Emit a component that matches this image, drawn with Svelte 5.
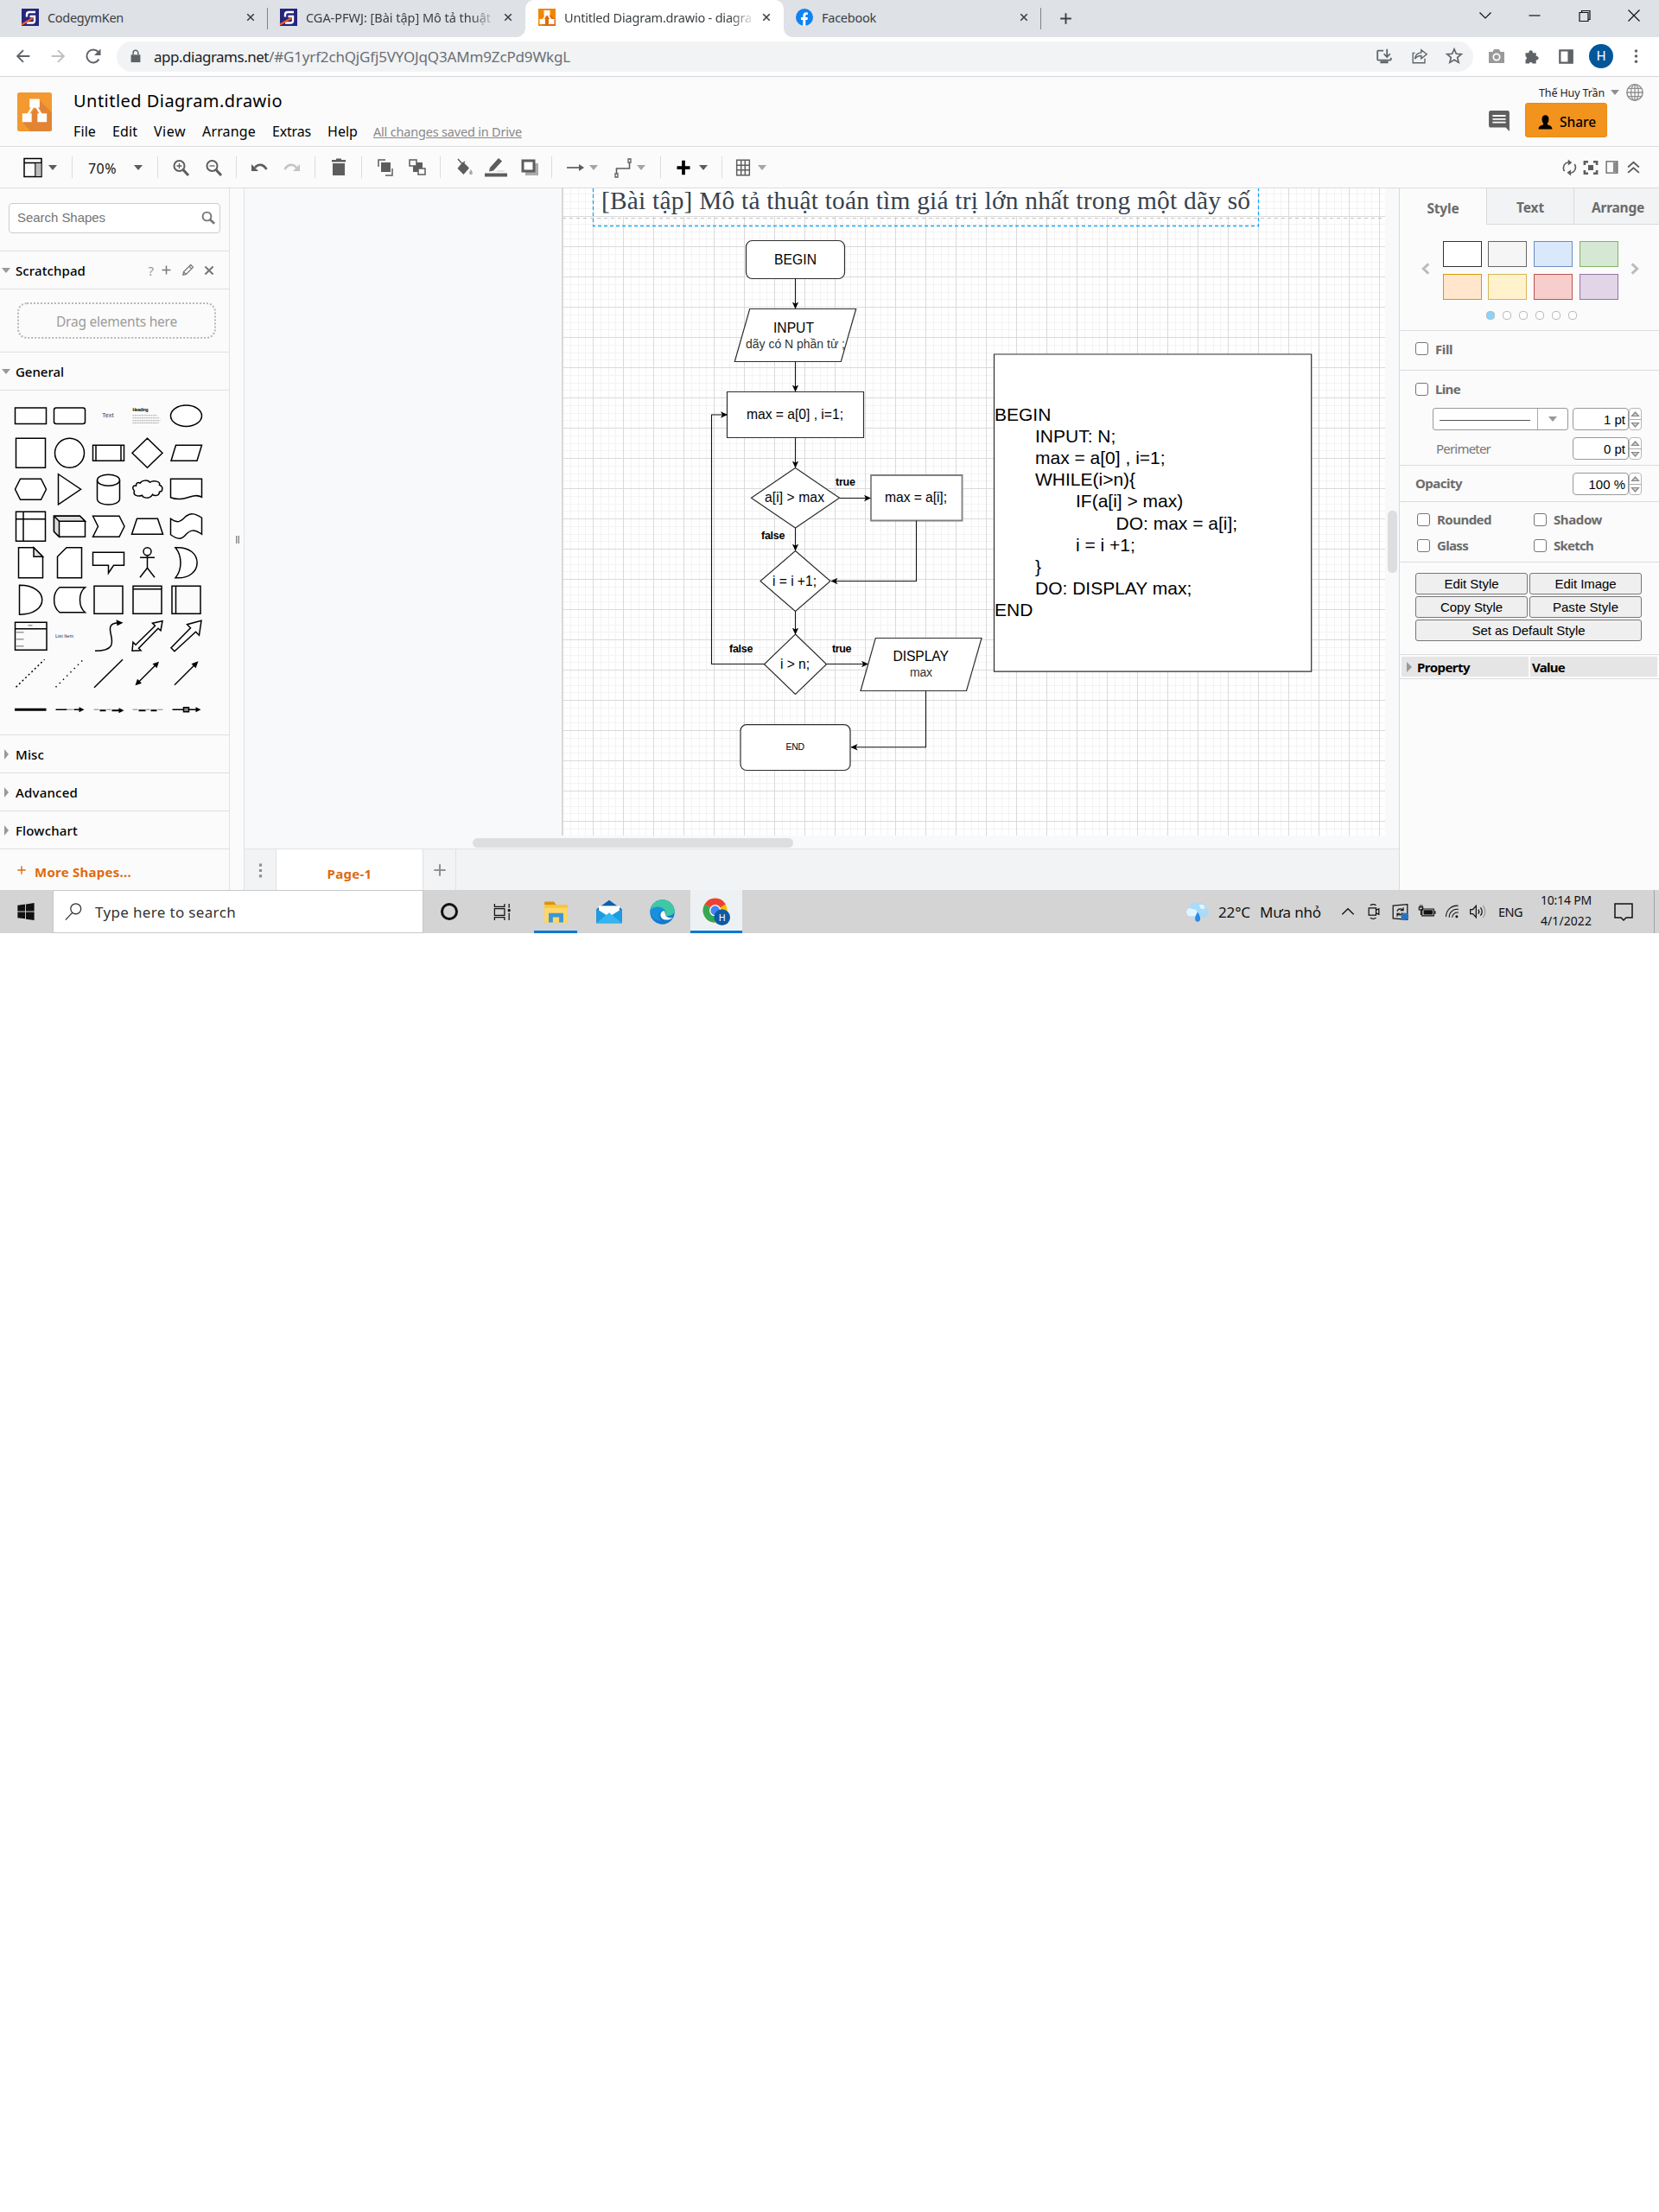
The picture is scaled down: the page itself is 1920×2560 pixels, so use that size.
<script>
  // Adjusts tracking so that a label occupies the given width in pixels.
  function fit(node, width) {
    const natural = node.getBoundingClientRect().width;
    node.style.letterSpacing = (width - natural) / node.textContent.length + 'px';
  }

  const logo = '<path d="M12 5v5M11 9 6 17M13 9l5 8" stroke="#fff" stroke-width="1.6" fill="none"/><path d="M8.5 4h7v6h-7zM3.500 14h6.500v6h-6.500zM14 14h6.500v6h-6.500z" fill="#fff"/>';

  const icons = {
    close: '<path d="M7 7l10 10M17 7 7 17" stroke-width="2.2"/>',
    plus: '<path d="M12 4v16M4 12h16" stroke-width="2.4"/>',
    chevDown: '<path d="M5.500 8.500l6.500 6.500 6.500-6.500" stroke-width="1.200"/>',
    minimize: '<path d="M5.500 12h13" stroke-width="1.200"/>',
    restore: '<path d="M6 8.500h10v10H6zM8.500 8.500V6.500h9.500v10h-2" stroke-width="1.200"/>',
    winClose: '<path d="M5.500 5.500l13 13M18.500 5.500l-13 13" stroke-width="1.200"/>',
    back: '<path d="M20 12H5M12 4.500 4.500 12l7.500 7.500" stroke-width="2"/>',
    forward: '<path d="M4 12h15M12 4.500l7.500 7.500-7.500 7.500" stroke-width="2"/>',
    reload: '<path d="M18.500 15.500A7.500 7.500 0 1 1 17.600 7" stroke-width="2"/><path d="M20.500 3.500v7.500H13z" fill="currentColor" stroke="none"/>',
    lock: '<path d="M5.500 10h13v10.500h-13z" fill="currentColor" stroke="none"/><path d="M8.500 10V7.500a3.500 3.500 0 0 1 7 0V10" stroke-width="1.800"/>',
    install: '<path d="M11 5H4.500a1 1 0 0 0-1 1v10a1 1 0 0 0 1 1h15a1 1 0 0 0 1-1v-2M15.500 3v9M11.500 9l4 4 4-4" stroke-width="1.900"/><path d="M7 18h10v3H7z" fill="currentColor" stroke="none"/>',
    share: '<path d="M6 8H3.500v12.500h15V15M14 4l7 5.500-7 5.500v-3.500c-4 0-6 1-8 4 .5-5 3-7.500 8-8z" stroke-width="1.500"/>',
    star: '<path d="M12 3l2.600 6 6.400.5-5 4.200 1.600 6.300L12 16.600 6.400 20 8 13.700 3 9.500 9.400 9z" stroke-width="1.800"/>',
    camera: '<path d="M3 7h4.500L9 4h6l1.500 3H21v13H3z" fill="currentColor" stroke="none"/><circle cx="12" cy="13" r="4.500" fill="#fff" stroke="none"/><circle cx="12" cy="13" r="2.800" fill="currentColor" stroke="none"/>',
    puzzle: '<path d="M4 7h4.500a2.600 2.600 0 1 1 5 0H18v4.500a2.600 2.600 0 1 1 0 5V21h-4.800a2.300 2.300 0 0 0-4.400 0H4v-4.800a2.300 2.300 0 0 0 0-4.400z" fill="currentColor" stroke="none"/>',
    sidePanel: '<path d="M4.500 4.500h15v15h-15z" stroke-width="2.400"/><path d="M14 4h6v16h-6z" fill="currentColor" stroke="none"/>',
    dots: '<path d="M10 2h4v4h-4zM10 10h4v4h-4zM10 18h4v4h-4z" fill="currentColor" stroke="none"/>',
    menuDots: '<circle cx="12" cy="4.500" r="2" fill="currentColor"  stroke="none"/><circle cx="12" cy="11.500" r="2" fill="currentColor" stroke="none"/><circle cx="12" cy="18.500" r="2" fill="currentColor" stroke="none"/>',
    globe: '<circle cx="12" cy="12" r="10" stroke-width="1.600"/><ellipse cx="12" cy="12" rx="4.800" ry="10" stroke-width="1.400"/><path d="M12 2v20M2 12h20M3.500 7h17M3.500 17h17" stroke-width="1.400"/>',
    comment: '<path d="M3 1h18a2 2 0 0 1 2 2v20l-4-4H3a2 2 0 0 1-2-2V3a2 2 0 0 1 2-2z" fill="currentColor" stroke="none"/><path d="M5 6.500h14M5 10h14M5 13.500h14" stroke="#fbfbfb" stroke-width="1.700"/>',
    person: '<path d="M2 22c0-4 3-5 7-6.500V14C7.500 12 7 9.500 7 7c0-3.500 2-5.500 5-5.500S17 3.500 17 7c0 2.500-.5 5-2 7v1.500c4 1.500 7 2.500 7 6.500z" fill="currentColor" stroke="none"/>',
    layout: '<path d="M2 1.500h20v21H2zM2 6.500h20M15 6.500v16" stroke-width="1.500"/><path d="M15.500 7h6v15h-6z" fill="#bbb" stroke="none"/>',
    zoomIn: '<circle cx="10.500" cy="10" r="6" stroke-width="2"/><path d="M15 14.500l6 6.500" stroke-width="3"/><path d="M10.500 7v6M7.500 10h6" stroke-width="1.300"/>',
    zoomOut: '<circle cx="10.500" cy="10" r="6" stroke-width="2"/><path d="M15 14.500l6 6.500" stroke-width="3"/><path d="M7.500 10h6" stroke-width="1.300"/>',
    undo: '<path d="M7 12c4-5 10-4 13.500 2" stroke-width="2.600"/><path d="M3 8v8h8z" fill="currentColor" stroke="none"/>',
    redo: '<path d="M17 12c-4-5-10-4-13.500 2" stroke-width="2.600"/><path d="M21 8v8h-8z" fill="currentColor" stroke="none"/>',
    trash: '<path d="M4 3h5V1.500h6V3h5v2.500H4zM5 7h14v14H5z" fill="currentColor" stroke="none"/>',
    front: '<path d="M7 6h11v11H7z" fill="currentColor" stroke="none"/><path d="M4 11V3h8M20 13v8h-8" stroke-width="1.500"/>',
    toBack: '<path d="M7 6h11v11H7z" fill="currentColor" stroke="none"/><path d="M3 3h8v7H3zM13 13h8v7h-8z" fill="#fbfbfb" stroke-width="1.500"/>',
    fill: '<path d="M4.500 13 11 5.500l7 7-6.500 7.500z" fill="currentColor" stroke="none"/><path d="M5 2l7 8M6 12l7-7" stroke-width="1.500"/><path d="M20 14c3 4 2 6 0 6s-3-2 0-6z" fill="#aaa" stroke="none"/>',
    pencil: '<path d="M5 12 15 1l4 3.500-10 11-5 1z" fill="currentColor" stroke="none"/><path d="M13 16h9" stroke="#ccc"/><path d="M-1 20.500h26" stroke-width="4"/>',
    shadow: '<path d="M7 7h15v14H7z" fill="#aaa" stroke="none"/><path d="M4 4h13v12H4z" fill="#fff" stroke-width="3"/>',
    arrow: '<path d="M2 12h19" stroke-width="1.700"/><path d="M16 8l6 4-6 4z" fill="currentColor" stroke="none"/>',
    connector: '<path d="M4.500 20v-7h15V4" stroke-width="1.600"/><path d="M3 19h3v4H3zM18 2h3v4h-3z" fill="#fff" stroke-width="1.300"/>',
    bigPlus: '<path d="M12 2v20M3 12h18" stroke-width="4.500"/>',
    table: '<path d="M4 2.500h16v19H4zM9.500 2v20M14.500 2v20M4 9h16M4 15h16" stroke-width="1.600"/>',
    refresh: '<path d="M5.500 17a8 8 0 0 1 6-12.500M19.500 7a8 8 0 0 1-6 12.500" stroke-width="1.900"/><path d="M10.500.5l5.500 4.500-5.500 4zM14.500 23.500l-5.500-4.500 5.500-4z" fill="currentColor" stroke="none"/>',
    fitPage: '<path d="M2.500 8V3H8M16 3h5.500v5M21.500 16v5H16M8 21H2.500v-5" stroke-width="3.400"/><path d="M8 8h8v8H8z" fill="currentColor" stroke="none"/>',
    formatPanel: '<path d="M3 2.500h18v19H3z" stroke-width="1.800"/><path d="M14 4h6v16h-6z" fill="currentColor" opacity=".7" stroke="none"/>',
    collapse: '<path d="M3 12l9-8 9 8M3 21l9-8 9 8" stroke-width="2.600"/>',
    search: '<circle cx="10" cy="10" r="6.500" stroke-width="2.600"/><path d="M15 15l6.500 6" stroke-width="3.600"/>',
    edit: '<path d="M4 20l1-5L16.500 3.500l4 4L9 19zM14 6l4 4M5 15l4 4" stroke-width="1.800"/>',
    prev: '<path d="M17 3.500 8 12l9 8.500" stroke-width="4.500"/>',
    next: '<path d="M7 3.500 16 12l-9 8.500" stroke-width="4.500"/>',
    windows: '<path d="M1.500 4 11 2.800v8.700H1.500zM12 2.600 22.500 1v10.500H12zM1.500 12.500H11V21l-9.500-1.200zM12 12.500h10.500V23L12 21.500z" fill="currentColor" stroke="none"/>',
    find: '<circle cx="15" cy="8.500" r="6.500" stroke-width="1.400"/><path d="M10.500 13.500 2 22.500" stroke-width="1.400"/>',
    ring: '<circle cx="12" cy="12" r="8.500" stroke-width="3"/>',
    taskView: '<path d="M2.500 2v3.500h12V2M2.500 22v-3.500h12V22M2.500 8h12v8h-12zM20 2v5M20 13v9" stroke-width="1.300"/><path d="M18.500 8.500h3v3h-3z" fill="currentColor" stroke="none"/>',
    explorer: '<path d="M1 3h8l2 2h12v17H1z" fill="#f9c440" stroke="none"/><path d="M1 2h9l2 3H1z" fill="#d9940a" stroke="none"/><path d="M1 8h22v14H1z" fill="#ffd766" stroke="none"/><path d="M5 13h14v9h-4v-5H9v5H5z" fill="#3a96dd" stroke="none"/>',
    mail: '<path d="M1 10 12 2l11 8v12H1z" fill="#0f5fae" stroke="none"/><path d="M3 7h18v8H3z" fill="#fff" stroke="none"/><path d="M1 9.500l11 7 11-7V22H1z" fill="#1b9de2" stroke="none"/><path d="M1 22l11-9 11 9z" fill="#35b5f1" stroke="none"/>',
    edge: '<circle cx="12" cy="12" r="11" fill="#1479cc" stroke="none"/><path d="M1.500 10C3 3 8 1 12 1c7 0 11 5 11 9.500 0 3-2.500 5-6 5-2 0-3-.7-2.500-2 2-4-5-8-13-3.500z" fill="#3fc8a4" stroke="none"/><path d="M1.500 10c5-4.500 12-2.500 12.500 1.500-5-1-7 4-3 8.500-7 0-10-5-9.500-10z" fill="#1990dc" stroke="none"/><path d="M14 11c-5 0-5 8 2 8 2 0 4-.8 5.500-2-2 1-7-.5-7-3.500z" fill="#fff" stroke="none"/>',
    chrome: '<circle cx="11" cy="11" r="10.500" fill="#fbbc05" stroke="none"/><path d="M1.900 5.700A10.500 10.500 0 0 1 20.100 5.700L11 11z" fill="#ea4335" stroke="none"/><path d="M1.900 5.700A10.500 10.500 0 0 0 11 21.500L11 11z" fill="#34a853" stroke="none"/><circle cx="11" cy="11" r="5" fill="#fff" stroke="none"/><circle cx="11" cy="11" r="4" fill="#4285f4" stroke="none"/><circle cx="17" cy="17" r="7" fill="#0d5aa7" stroke="none"/>',
    cloud: '<path d="M5 17a5 5 0 0 1-1-9.500C5 3 9 1 12.500 3 17 1 21 4 21 8c4 1 4 8-1 9z" fill="#a9dbfa" stroke="none"/><path d="M1 12c0-4 4-5 6-3 3-1 6 2 5 6-4 2-11 3-11-3zM14 5c3-2 6 0 6 3-2 2-5 1-6-3z" fill="#e2f5ff" stroke="none"/><path d="M12.500 12c4 6 3 10 0 10s-4-4 0-10z" fill="#2c8be8" stroke="none"/>',
    chevUp: '<path d="M4 16l8-8 8 8" stroke-width="1.600"/>',
    meet: '<path d="M5 7h10v10H5zM15 10l4-2v8l-4-2M7 3.500c2-2 6-2 8 0M7 20.500c2 2 6 2 8 0" stroke-width="1.500"/>',
    update: '<path d="M2.500 3.500 21.500 2v20l-19-1.500z" stroke-width="1.400"/><path d="M8 11c1-4 6-4 8-1M16 6v4h-4M15 13c-1 3-5 4-7 1M8 18v-4h4" stroke-width="1.400"/><circle cx="18" cy="18" r="5" fill="#2673c4" stroke="none"/>',
    battery: '<path d="M5.500 8H21v9H5.500z" stroke-width="1.300"/><path d="M7.500 9.500H19.500v6H7.500zM22 10.500h1.500v4H22z" fill="currentColor" stroke="none"/><path d="M1.500 5.500v3.500h5V5.500zM3 2.500v3M5.500 2.500v3M4 9v7" stroke-width="1.300"/>',
    wifi: '<path d="M2 20A17 17 0 0 1 21 3M7 21A12 12 0 0 1 21 8.500M11.500 21A8 8 0 0 1 21 13.500" stroke-width="1.400"/><circle cx="18.500" cy="19.500" r="2" fill="currentColor" stroke="none"/>',
    sound: '<path d="M2 9h3.500L10 4v16l-4.500-5H2z" stroke-width="1.500"/><path d="M13 9c1.500 2 1.500 4 0 6M16 6.500c3 3 3 8 0 11" stroke-width="1.500"/><path d="M19.500 3.500c4 5 4 12 0 17" stroke="#999" stroke-width="1.500"/>',
    notice: '<path d="M2 3h20v16h-7l-3 3-3-3H2z" stroke-width="1.500"/>'
  };

  const tools = [
    ['layout', 24, 'dark'], ['caret'], ['sep'], ['zoom'], ['caret'], ['sep'],
    ['zoomIn', 24], ['zoomOut', 24], ['sep'], ['undo', 24], ['redo', 24, 'pale'], ['sep'],
    ['trash', 24], ['sep'], ['front', 24], ['toBack', 24], ['sep'],
    ['fill', 24], ['pencil', 24], ['shadow', 24], ['sep'],
    ['arrow', 24], ['caret', 0, 'soft'], ['connector', 24], ['caret', 0, 'soft'], ['sep'],
    ['bigPlus', 20, 'dark'], ['caret'], ['sep'], ['table', 22], ['caret', 0, 'soft'],
    ['refresh', 20], ['fitPage', 18], ['formatPanel', 17], ['collapse', 17]
  ];

  const menus = [['File', 26], ['Edit', 29], ['View', 37], ['Arrange', 62], ['Extras', 45], ['Help', 35]];

  const shapes = [
    '<path d="M-18-9.200h36v18.400h-36z" fill="#fff"/>',
    '<rect x="-18" y="-9.200" width="36" height="18.400" rx="2.500" fill="#fff"/>',
    '<text x="-7.500" y="2" font-size="7.500" fill="#445" stroke="none" textLength="13.500">Text</text>',
    '<text x="-17" y="-5.500" font-size="5" font-weight="700" fill="#000" stroke="none" textLength="18">Heading</text><path d="M-17-0.500h28M-17 2.500h31M-17 5.500h32M-17 8.200h30" stroke="#888" stroke-width=".7" stroke-dasharray="2 .6"/>',
    '<ellipse rx="18" ry="12.200" fill="#fff"/>',
    '<path d="M-17-17h34v34h-34z" fill="#fff"/>',
    '<circle r="17" fill="#fff"/>',
    '<path d="M-18-9h36V9h-36zM-14.500-9V9M14.500-9V9" fill="#fff"/>',
    '<path d="M0-17 17.500 0 0 17-17.500 0z" fill="#fff"/>',
    '<path d="M-12-9h30l-5.500 18h-30z" fill="#fff"/>',
    '<path d="M-12-12h24l6 12-6 12h-24l-6-12z" fill="#fff"/>',
    '<path d="M-13-17.500 13 0l-26 17.500z" fill="#fff"/>',
    '<path d="M-13-10.500v21.500c0 9 26 9 26 0v-21.500" fill="#fff"/><ellipse cy="-10.500" rx="13" ry="6.500" fill="#fff"/>',
    '<path d="M-8.500-7C-6-11 1-11 3-8c4-3 13-1 11 3 5 2 4 8 0 8 0 5-6 5-8 3-3 6-11 4-12 1-5 2-11 0-9-5-3-3-2-7 2-6 0-3 2-5 4.500-3z" fill="#fff"/>',
    '<path d="M-18-12h36V9C7 3-2 16-18 9.500z" fill="#fff"/>',
    '<path d="M-17-17h34v34h-34zM-17-8.500h34M-8.500-17v34" fill="#fff"/>',
    '<path d="M-18-12h30l6 6v18h-30l-6-6z" fill="#fff"/><path d="M-18-12h30l6 6h-30v18l-6-6z" fill="#ddd"/><path d="M-18-12l6 6"/>',
    '<path d="M-18-12h30.500L18.500 0l-6 12H-18l6-12z" fill="#fff"/>',
    '<path d="M-12-9h24l6 18h-36z" fill="#fff"/>',
    '<path d="M-18-9C-9-2-5-7 0-12c5-3 9-4 18 2V9C9 3 5 4 0 9c-5 6-9 7-18 .5z" fill="#fff"/>',
    '<path d="M-14-17.500H3.500L14-7v24.500h-28z" fill="#fff"/><path d="M3.500-17.500V-7H14z" fill="#ddd"/>',
    '<path d="M-14-7l10.500-10.500H14v35h-28z" fill="#fff"/>',
    '<path d="M-18-12h36V3H6L0 12V3h-18z" fill="#fff"/>',
    '<circle cy="-13" r="4.500" fill="#fff"/><path d="M0-8.500V6M-8.500-6h17M-8.500 17 0 6l8.500 11"/>',
    '<path d="M-12.500-17.500C21-20 21 20-12.500 17.500-4.500 8-4.500-8-12.500-17.500z" fill="#fff"/>',
    '<path d="M-13-17C22-17 22 17-13 17z" fill="#fff"/>',
    '<path d="M-11.500-14.500H18C10-8 10 8 18 14.500h-29.500C-20 8-20-8-11.500-14.500z" fill="#fff"/>',
    '<path d="M-16.500-16h33v32h-33z"/>',
    '<path d="M-16.500-16h33v32h-33zM-16.500-12.500h33"/>',
    '<path d="M-16.500-16h33v32h-33zM-12-16v32"/>',
    '<path d="M-18-16h36.500v32H-18zM-18-8.500h36.500"/><path d="M-3-12.500h5M-17-4.500h9M-17 3.500h9M-17 11.500h9" stroke="#999"/>',
    '<text x="-16.500" y="1.500" font-size="5.500" fill="#226" stroke="none" textLength="21">List Item</text>',
    '<path d="M-15.500 17C25 17-14-14 11-15.500"/><path d="M9-19l8 3.500-7 3.500z" fill="#000" stroke="none"/>',
    '<path d="M-17.500 17l1-10 3 3L9-12l-3-3 11.500-2.500-2 11-3-2.500L-10 14l2.500 2.500z"/>',
    '<path d="M-13.500 17.500l-4-4L5-9.500l-4-4 16.500-4.500-2.500 17-4-4z"/>',
    '<path d="M-17 16 16-16" stroke-dasharray="2 3"/>',
    '<path d="M-16 16 16-16" stroke-dasharray="1.500 4.500"/>',
    '<path d="M-16.500 16.500 16.500-16"/>',
    '<path d="M-12 12 11-11"/><path d="M-14 14l2.500-7.500 5 5zM13.500-13.500 11-6 6-11z" fill="#000" stroke="none"/>',
    '<path d="M-13.500 13.500 11-11"/><path d="M14-14 11-6 6-11z" fill="#000" stroke="none"/>',
    '<path d="M-18.500 0h36.500" stroke-width="3"/>',
    '<path d="M-16 0h13M5 0h8"/><path d="M-3 0h7" stroke="#aaa"/><path d="M11-3l6 3-6 3z" fill="#000" stroke="none"/>',
    '<path d="M-10 1h7M4 1h10" stroke-width="1.800"/><path d="M-17 0h6M-2 0h5" stroke="#aaa"/><path d="M12-2l6 3-6 3z" fill="#000" stroke="none"/>',
    '<path d="M-10 1h8M4 1h7" stroke-width="1.800"/><path d="M-17 0h6M-2 0h5M12 0h6" stroke="#aaa"/>',
    '<path d="M-16 0h28"/><path d="M-3-2.500h6v5h-6z" fill="#888"/><path d="M11-3l6 3-6 3z" fill="#000" stroke="none"/>'
  ];

  const swatches = [
    ['#ffffff', '#333333'], ['#f5f5f5', '#666666'], ['#dae8fc', '#6c8ebf'], ['#d5e8d4', '#82b366'],
    ['#ffe6cc', '#d79b00'], ['#fff2cc', '#d6b656'], ['#f8cecc', '#b85450'], ['#e1d5e7', '#9673a6']
  ];

  const code = [
    [1151, 'BEGIN'], [1198, 'INPUT: N;'], [1198, 'max = a[0] , i=1;'], [1198, 'WHILE(i>n){'],
    [1245, 'IF(a[i] > max)'], [1291.500, 'DO: max = a[i];'], [1245, 'i = i +1;'], [1198, '}'],
    [1198, 'DO: DISPLAY max;'], [1151, 'END']
  ];

  // x, baseline, width, text, kind
  const labels = [
    [896, 305.500, 49, 'BEGIN', 'node'], [895, 384.700, 47, 'INPUT', 'node'],
    [863, 403, 115, 'dãy có N phần tử ;', 'sub'], [864, 485, 112, 'max = a[0] , i=1;', 'node'],
    [885, 581, 69, 'a[i] > max', 'node'], [1024, 581, 72, 'max = a[i];', 'node'],
    [894, 678, 51, 'i = i +1;', 'node'], [903, 774, 34, 'i > n;', 'node'],
    [1033.500, 765, 64.500, 'DISPLAY', 'node'], [1053, 783, 26, 'max', 'sub'],
    [967, 562, 23, 'true', 'edge'], [881, 624, 27.500, 'false', 'edge'],
    [844, 755, 27.500, 'false', 'edge'], [963, 755, 22.500, 'true', 'edge'],
    [909.500, 868, 21.500, 'END', 'end']
  ];
</script>

{#snippet icon(name, size)}
  <svg class="icon" viewBox="0 0 24 24" width={size} height={size} fill="none" stroke="currentColor">{@html icons[name]}</svg>
{/snippet}

{#snippet caret()}
  <svg class="icon" viewBox="0 0 12 6" width="12" height="6"><path d="M1 0h10L6 6z" fill="currentColor" /></svg>
{/snippet}

{#snippet codegym()}
  <svg class="icon" viewBox="0 0 20 20" width="20" height="20">
    <rect width="20" height="20" fill="#25257d" />
    <path d="M16 4H9Q6 4 6 7v2.500M9.500 9H15v5q0 2.500-2.500 2.500H6" fill="none" stroke="#fff" stroke-width="2.400" />
    <path d="M0 18.500 13 11" stroke="#f15a24" stroke-width="2.200" />
  </svg>
{/snippet}

{#snippet spinner()}
  <span class="spinner">
    <svg viewBox="0 0 15 26" width="15" height="26"><path d="M0 13.500h15" stroke="#aaa" /><path d="M3.500 9.500h8L7.500 5zM3.500 17.500h8l-4 4.500z" fill="#ccc" stroke="#888" stroke-width="1.200" /></svg>
  </span>
{/snippet}

<div class="screen">
  <div class="tabs">
    <div class="tab first">{@render codegym()}<span class="name"><span use:fit={88}>CodegymKen</span></span>{@render icon('close', 18)}</div>
    <div class="tab">{@render codegym()}<span class="name fade"><span use:fit={214}>CGA-PFWJ: [Bài tập] Mô tả thuật</span></span>{@render icon('close', 18)}</div>
    <div class="tab active">
      <svg class="icon" viewBox="2 2 20 20" width="20" height="20"><rect x="2" y="2" width="20" height="20" fill="#f08705" /><path d="M12 5l10 10v7H9l-5-3 6-6z" fill="#df6c0c" />{@html logo}</svg>
      <span class="name fade"><span use:fit={217}>Untitled Diagram.drawio - diagra</span></span>{@render icon('close', 18)}
    </div>
    <div class="tab last">
      <svg class="icon" viewBox="0 0 20 20" width="20" height="20"><circle cx="10" cy="10" r="10" fill="#0f82f4" /><path d="M8.300 20v-7H6v-3h2.300V8c0-2.500 1.500-3.800 3.600-3.800l2 .2v2.500h-1.200c-1 0-1.400.6-1.400 1.300V10h2.600l-.4 3h-2.200v7z" fill="#fff" /></svg>
      <span class="name"><span use:fit={63}>Facebook</span></span>{@render icon('close', 18)}
    </div>
    <div class="newtab">{@render icon('plus', 19)}</div>
    <div class="window">{@render icon('chevDown', 24)}{@render icon('minimize', 24)}{@render icon('restore', 24)}{@render icon('winClose', 24)}</div>
  </div>

  <div class="address">
    <div class="nav">{@render icon('back', 22)}<span class="pale">{@render icon('forward', 22)}</span>{@render icon('reload', 24)}</div>
    <div class="pill">
      {@render icon('lock', 20)}
      <span class="url"><span class="host" use:fit={133}>app.diagrams.net</span><span use:fit={349}>/#G1yrf2chQjGfj5VYOJqQ3AMm9ZcPd9WkgL</span></span>
      <span class="pillicons">{@render icon('install', 22)}{@render icon('share', 22)}{@render icon('star', 22)}</span>
    </div>
    <div class="ext"><span class="cam">{@render icon('camera', 24)}</span>{@render icon('puzzle', 21)}{@render icon('sidePanel', 23)}<span class="avatar">H</span>{@render icon('menuDots', 21)}</div>
  </div>

  <header>
    <svg class="logo" viewBox="0 0 24 27" width="40" height="45" preserveAspectRatio="none"><rect width="24" height="27" rx="1.500" fill="#f2992f" /><path d="M15 5l9 9v11.500a1.500 1.500 0 0 1-1.500 1.500H9l-5-6 7-8z" fill="#e28434" /><g transform="translate(0 .5)">{@html logo}</g></svg>
    <div class="titles">
      <div class="doc"><span use:fit={242}>Untitled Diagram.drawio</span></div>
      <div class="menus">
        {#each menus as [m, w]}<span use:fit={w}>{m}</span>{/each}
        <span class="saved" use:fit={172}>All changes saved in Drive</span>
      </div>
    </div>
    <div class="comment">{@render icon('comment', 26)}</div>
    <div class="account">
      <div class="user"><span use:fit={76}>Thế Huy Trần</span>{@render caret()}{@render icon('globe', 22)}</div>
      <div class="sharebtn">{@render icon('person', 19)}<span use:fit={42}>Share</span></div>
    </div>
  </header>

  <div class="toolbar">
    {#each tools as [name, size, tone]}
      {#if name === 'sep'}<i class="sep"></i>
      {:else if name === 'zoom'}<span class="zoomlevel"><span use:fit={33}>70%</span></span>
      {:else if name === 'caret'}<span class="tool {tone ?? ''}">{@render caret()}</span>
      {:else}<span class="tool {tone ?? ''}">{@render icon(name, size)}</span>{/if}
    {/each}
  </div>

  <main>
    <aside class="left">
      <div class="searchrow"><div class="searchbox"><span use:fit={102}>Search Shapes</span>{@render icon('search', 18)}</div></div>
      <div class="section">
        {@render caret()}<b use:fit={81}>Scratchpad</b>
        <span class="padtools"><span>?</span>{@render icon('plus', 15)}{@render icon('edit', 17)}{@render icon('close', 22)}</span>
      </div>
      <div class="dragrow"><div class="drag"><span use:fit={140}>Drag elements here</span></div></div>
      <div class="section">{@render caret()}<b use:fit={56}>General</b></div>
      <div class="shapes">
        {#each shapes as s}<svg viewBox="-22.500 -21.250 45 42.500" width="45" height="42.500" fill="none" stroke="#000" stroke-width="1.500">{@html s}</svg>{/each}
      </div>
      {#each [['Misc', 33], ['Advanced', 72], ['Flowchart', 72]] as [n, w]}
        <div class="section shut"><svg viewBox="0 0 6 12" width="6" height="12"><path d="M0 0l5 6-5 6z" fill="#999" /></svg><b use:fit={w}>{n}</b></div>
      {/each}
      <div class="more"><span class="moreplus">{@render icon('plus', 14)}</span><b use:fit={112}>More Shapes...</b></div>
    </aside>
    <div class="splitter"><i></i></div>

    <section class="canvas">
      <div class="view">
        <svg class="diagram" viewBox="651 218 952 749" width="952" height="749">
          <defs>
            <pattern id="grid" x="651" y="250" width="35" height="35" patternUnits="userSpaceOnUse">
              <path d="M9.500 0v35M18.500 0v35M26.500 0v35M0 9.500h35M0 18.500h35M0 26.500h35" stroke="#f3f3f3" />
              <path d="M.5 0v35M0 .5h35" stroke="#dadada" />
            </pattern>
            <marker id="tip" viewBox="0 0 8 8" refX="7.500" refY="4" markerWidth="8" markerHeight="8" markerUnits="userSpaceOnUse" orient="auto"><path d="M0 .3 8 4 0 7.700l2-3.700z" /></marker>
          </defs>
          <path d="M651 218h952v749H651z" fill="#fff" /><path d="M651 218h952v749H651z" fill="url(#grid)" />
          <path d="M695 218h754v32H695z" fill="#fff" />
          <path d="M651 252.500h952" stroke="#c4c4c4" stroke-dasharray="4 4" />
          <path d="M686.500 218v43.500H1456.500V218" fill="none" stroke="#19a5f5" stroke-width="1.300" stroke-dasharray="4 3" />
          <text class="heading" x="696" y="242" textLength="751">[Bài tập] Mô tả thuật toán tìm giá trị lớn nhất trong một dãy số</text>
          <g class="nodes">
            <rect x="863.500" y="278.500" width="114" height="44" rx="7" />
            <path d="M867.700 357.500h123l-17.400 61h-123z" />
            <path d="M841.500 453.500h158v53h-158z" />
            <path d="M920.500 541.500l51 34.700-51 34.800-51-34.800z" />
            <path d="M1008 550h105.500v52.500H1008z" class="grey" />
            <path d="M920.500 637.500l40.500 35-40.500 35-40.500-35z" />
            <path d="M920.500 734l36 34.700-36 34.800-36-34.800z" />
            <path d="M1013.300 738.500h122.700l-17.500 61H996z" />
            <rect x="857" y="838.700" width="127" height="52.800" rx="7" />
            <path d="M1150.500 410h367.200v367.200h-367.200z" />
          </g>
          <g class="edges">
            <path d="M920.500 322.500V357" /><path d="M920.500 418.500V453" /><path d="M920.500 506.500V541" />
            <path d="M971.500 576.500h36" /><path d="M920.500 611v26" /><path d="M1060.500 602.500v70H962" />
            <path d="M920.500 707.500V734" /><path d="M956.500 768.500H1004.500" />
            <path d="M884.500 768.500h-61V480h18" /><path d="M1071.500 799.500v65.200H985" />
          </g>
          {#each labels as [x, y, w, t, kind]}<text class={kind} {x} {y} textLength={w}>{t}</text>{/each}
          {#each code as [x, t], i}<text class="code" {x} y={486.500 + i * 25.200}>{t}</text>{/each}
        </svg>
        <div class="vscroll"><i></i></div>
        <div class="hscroll"><i></i></div>
      </div>
      <div class="pages">
        <span class="pagemenu">{@render icon('dots', 19)}</span>
        <span class="page"><b use:fit={52}>Page-1</b></span>
        <span class="addpage">{@render icon('plus', 20)}</span>
      </div>
    </section>

    <aside class="right">
      <div class="formattabs"><b class="on"><span use:fit={37}>Style</span></b><b><span use:fit={32}>Text</span></b><b><span use:fit={61}>Arrange</span></b></div>
      <div class="presets">
        <div class="pick">
          {@render icon('prev', 16)}
          <div class="swatches">{#each swatches as [bg, line]}<i style="background:{bg};border-color:{line}"></i>{/each}</div>
          {@render icon('next', 16)}
        </div>
        <div class="pager"><i class="now"></i><i></i><i></i><i></i><i></i><i></i></div>
      </div>
      <div class="fillrow"><i class="cb"></i><b use:fit={20}>Fill</b></div>
      <div class="linebox">
        <div class="linehead"><i class="cb"></i><b use:fit={29}>Line</b></div>
        <div class="linerow"><span class="select"><i></i><em>{@render caret()}</em></span><span class="num">1 pt</span>{@render spinner()}</div>
        <div class="linerow second"><span class="per"><span use:fit={63}>Perimeter</span></span><span class="num">0 pt</span>{@render spinner()}</div>
      </div>
      <div class="opacity"><b><span use:fit={54}>Opacity</span></b><span class="num">100 %</span>{@render spinner()}</div>
      <div class="checks">
        {#each [['Rounded', 63], ['Shadow', 56], ['Glass', 36], ['Sketch', 46]] as [n, w]}<span><i class="cb"></i><b use:fit={w}>{n}</b></span>{/each}
      </div>
      <div class="buttons">
        {#each [['Edit Style', 63], ['Edit Image', 71], ['Copy Style', 72], ['Paste Style', 76], ['Set as Default Style', 131]] as [n, w]}<button><span use:fit={w}>{n}</span></button>{/each}
      </div>
      <div class="props"><b><svg viewBox="0 0 6 12" width="6" height="12"><path d="M0 0l6 6-6 6z" fill="#999" /></svg><span use:fit={61}>Property</span></b><b><span use:fit={38}>Value</span></b></div>
    </aside>
  </main>

  <footer>
    <div class="start">{@render icon('windows', 22)}</div>
    <div class="winsearch">{@render icon('find', 22)}<span use:fit={163}>Type here to search</span></div>
    <div class="apps">
      <span>{@render icon('ring', 24)}</span><span>{@render icon('taskView', 23)}</span>
      <span class="running">{@render icon('explorer', 29)}</span><span>{@render icon('mail', 32)}</span>
      <span>{@render icon('edge', 31)}</span><span class="running current"><svg class="icon" viewBox="0 0 24 24" width="32" height="32">{@html icons.chrome}<text x="17" y="20" text-anchor="middle" font-size="8" fill="#fff">H</text></svg></span>
    </div>
    <div class="weather">{@render icon('cloud', 27)}<span use:fit={37}>22°C</span><span use:fit={71}>Mưa nhỏ</span></div>
    <div class="tray">{@render icon('chevUp', 20)}{@render icon('meet', 20)}{@render icon('update', 21)}{@render icon('battery', 21)}{@render icon('wifi', 18)}{@render icon('sound', 20)}</div>
    <span class="lang"><span use:fit={28}>ENG</span></span>
    <div class="clock"><span use:fit={59}>10:14 PM</span><span use:fit={59}>4/1/2022</span></div>
    <div class="notice">{@render icon('notice', 24)}</div>
    <i class="desk"></i>
  </footer>
</div>

<style>
  :global(body) { background: #fff; }
  .screen { width: 1920px; height: 1080px; overflow: hidden; font-family: "Noto Sans", "Open Sans", sans-serif; color: #000; }
  .screen :global(*) { box-sizing: border-box; }
  span, b { white-space: nowrap; }
  svg { display: block; flex: none; overflow: visible; }

  .tabs { display: flex; height: 43px; background: #dee1e6; color: #3c4043; }
  .tab { display: flex; align-items: center; width: 298px; padding: 0 11px 3px 14px; font-size: 14.5px; position: relative; }
  .tab.first { width: 310px; padding-left: 25px; }
  .tab .name { flex: 1; margin: 0 7px 0 10px; }
  .tab .name.fade { mask-image: linear-gradient(90deg, #000 88%, rgba(0, 0, 0, .1)); }
  .tab.first::after, .tab.last::after { content: ""; position: absolute; right: 0; top: 9px; width: 1px; height: 25px; background: #808388; }
  .tab.active { width: 299px; padding-left: 15px; background: #fff; border-radius: 10px 10px 0 0; }
  .tab.active::before, .tab.active::after { content: ""; position: absolute; bottom: 0; left: -10px; width: 10px; height: 10px; background: radial-gradient(circle at 0 0, transparent 9.500px, #fff 10px); }
  .tab.active::after { left: auto; right: -10px; background: radial-gradient(circle at 100% 0, transparent 9.500px, #fff 10px); }
  .newtab { padding: 12px 0 0 19px; }
  .window { display: flex; gap: 33.500px; margin-left: auto; padding: 6px 17px 0 0; color: #111; }

  .address { display: flex; align-items: center; height: 46px; padding-bottom: 1px; background: #fff; border-bottom: 1px solid #d5d7da; color: #5f6368; }
  .nav { display: flex; align-items: center; gap: 18px; width: 135px; padding-left: 16px; }
  .pale { color: #bdbfc1; }
  .pill { display: flex; align-items: center; width: 1570px; height: 35px; border-radius: 18px; background: #f1f3f4; padding-left: 12px; }
  .url { display: flex; margin-left: 11px; font-size: 17px; color: #6b6f74; }
  .host { color: #202124; }
  .pillicons { display: flex; gap: 18.500px; margin-left: auto; padding-right: 11px; }
  .ext { display: flex; align-items: center; width: 215px; padding-left: 15px; gap: 18px; }
  .cam { color: #9a9a9a; }
  .avatar { width: 28px; height: 28px; margin-left: -3px; margin-right: -2px; border-radius: 50%; background: #01579b; color: #fff; text-align: center; font: 15px/28px Roboto, sans-serif; }

  header { display: flex; height: 81px; padding-left: 20px; background: #fbfbfb; border-bottom: 1px solid #dadce0; }
  .logo { margin-top: 18px; }
  .titles { flex: none; width: 1632px; padding: 14px 0 0 25px; }
  .doc { font-size: 20px; line-height: 27px; }
  .menus { display: flex; margin-top: 9px; gap: 19px; font-size: 16px; line-height: 26px; }
  .saved { font-size: 14.500px; color: #888; text-decoration: underline; margin-left: -1px; }
  .comment { flex: none; width: 56px; padding: 38px 0 0 30px; color: #5f5f5f; }
  .account { padding-left: 17px; }
  .user { display: flex; align-items: center; height: 30px; margin-left: 16px; padding-top: 6px; font-size: 12.500px; gap: 6px; color: #222; }
  .user :global(svg) { color: #8f8f8f; }
  .sharebtn { display: flex; align-items: center; gap: 7px; width: 95px; height: 40px; padding-left: 13px; padding-top: 4px; background: #f2931e; border: 1px solid #ec8a10; border-radius: 3px; font-size: 15.500px; font-weight: 500; }

  .toolbar { display: grid; align-items: center; height: 48px; padding-left: 26px; background: #fbfbfb; border-bottom: 1px solid #dadce0; color: #5d5d5d;
    grid-template-columns: 29px 28px 19px 52px 28px 15px 38px 38px 15px 38px 38px 16px 38px 16px 37px 38px 16px 37px 39px 37px 16px 27px 28px 27px 28px 17px 27px 27px 14px 27px 930px 26px 25px 25px 20px; }
  .sep { width: 1px; height: 25px; background: #dcdcdc; }
  .zoomlevel { font-size: 16px; color: #111; padding-top: 3px; }
  .tool.dark { color: #000; }
  .tool.pale { color: #c4c4c4; }
  .tool.soft { color: #a5a5a5; }

  main { display: flex; height: 812px; background: #fbfbfb; }
  .left { width: 266px; border-right: 1px solid #dfe1e4; }
  .searchrow { height: 73px; padding: 17px 10px 0; border-bottom: 1px solid #e0e0e0; }
  .searchbox { display: flex; align-items: center; justify-content: space-between; height: 35px; padding: 0 4px 2px 9px; border: 1px solid #ccc; border-radius: 4px; background: #fff; color: #757575; font: 15px "Liberation Sans", sans-serif; }
  .section { display: flex; align-items: center; height: 44px; padding-left: 1px; border-bottom: 1px solid #e0e0e0; color: #999; }
  .section b { margin-left: 5px; font-size: 15px; font-weight: 500; color: #000; }
  .section.shut { padding-left: 5px; }
  .section.shut b { margin-left: 7px; }
  .padtools { display: flex; align-items: center; gap: 9px; margin-left: auto; padding-right: 12px; font-size: 15px; color: #777; }
  .padtools span { color: #999; margin-right: -2px; }
  .padtools :global(svg:last-child) { margin-left: -4px; }
  .dragrow { height: 73px; padding: 15px 15px 0 20px; border-bottom: 1px solid #e0e0e0; }
  .drag { display: flex; align-items: center; justify-content: center; width: 230px; height: 42px; padding-top: 1px; border: 2px dotted #b8b8b8; border-radius: 11px; color: #9c9c9c; font-size: 15.500px; }
  .shapes { display: grid; grid-template-columns: repeat(5, 45px); grid-auto-rows: 42.500px; height: 399px; padding: 8px 0 0 13px; border-bottom: 1px solid #e0e0e0; font-family: "Liberation Sans", sans-serif; }
  .more { display: flex; align-items: center; height: 47px; padding: 4px 0 0 18px; color: #e0690f; font-size: 15px; }
  .more b { margin-left: 8px; }
  .moreplus { padding-bottom: 3px; }
  .splitter { display: flex; align-items: center; justify-content: center; width: 17px; padding-left: 2px; border-right: 1px solid #dfe1e4; }
  .splitter i { width: 4px; height: 9px; border: solid #888; border-width: 0 1px; background: #ccc; }

  .canvas { width: 1336px; }
  .view { display: grid; grid-template: 749px 15px / 952px 16px; height: 765px; padding-left: 368px; background: #f8f9fb; border-bottom: 1px solid #e0e2e4; }
  .diagram { overflow: hidden; box-shadow: -1px 0 0 #d5d7d9; font-family: "Liberation Sans", sans-serif; }
  .vscroll { padding: 373px 0 0 3px; }
  .vscroll i { display: block; width: 11px; height: 72px; border-radius: 5px; background: #dddee0; }
  .hscroll { padding-top: 3px; }
  .hscroll i { display: block; width: 371px; height: 11px; margin-left: -104px; border-radius: 6px; background: #dddee0; }
  .heading { font: 29.400px "Liberation Serif", serif; fill: #37424e; }
  .nodes { fill: #fff; stroke: #2e2e2e; stroke-width: 1.200; }
  .nodes .grey { stroke: #808080; stroke-width: 1.800; }
  .edges path { fill: none; stroke: #111; stroke-width: 1.100; marker-end: url(#tip); }
  .node { font-size: 15.700px; }
  .sub { font-size: 14px; fill: #333; }
  .edge { font-size: 12.500px; font-weight: 700; }
  .end { font-size: 10.500px; }
  .code { font-size: 21px; }
  .pages { display: flex; height: 47px; background: #f1f3f4; color: #909090; }
  .pages span { display: flex; align-items: center; justify-content: center; }
  .pagemenu { width: 36px; padding-top: 2px; }
  .page { width: 171px; padding-top: 9px; background: #fff; border: solid #dfe1e4; border-width: 0 1px; color: #e0690f; font-size: 15px; }
  .addpage { width: 38px; border-right: 1px solid #dfe1e4; }

  .right { width: 301px; border-left: 1px solid #d9dade; color: #6b6b6b; font-size: 15px; }
  .formattabs { display: flex; height: 42px; }
  .formattabs b { display: flex; align-items: center; justify-content: center; width: 101px; padding-top: 3px; flex: none; background: #f1f3f4; border: solid #d9dade; border-width: 0 0 1px 1px; font-size: 15.500px; }
  .formattabs b:last-child { width: 99px; padding-left: 3px; }
  .formattabs b.on { width: 100px; padding-top: 4px; background: none; border: 0; }
  .presets { height: 123px; padding: 19px 0 0 22px; border-bottom: 1px solid #dadce0; }
  .pick { display: flex; align-items: center; gap: 11.500px; color: #bcbcbc; }
  .pick > :global(svg) { margin-top: -4px; }
  .swatches { display: grid; grid-template-columns: repeat(4, 45px); gap: 8px 7.700px; }
  .swatches i { height: 30px; border: 1px solid; }
  .pager { display: flex; gap: 9px; margin: 13px 0 0 78px; }
  .pager i { width: 10px; height: 10px; border: 1px solid #bbb; border-radius: 4px; background: #fff; }
  .pager .now { background: #86d5ff; }
  .cb { width: 15px; height: 15px; flex: none; border: 1px solid #767676; border-radius: 3px; background: #fff; }
  .fillrow { display: flex; align-items: center; gap: 8px; height: 46px; padding: 0 0 4px 18px; border-bottom: 1px solid #dadce0; }
  .linebox { height: 110px; padding: 10px 0 0 18px; border-bottom: 1px solid #dadce0; }
  .linehead { display: flex; align-items: center; gap: 8px; height: 22px; }
  .linerow { display: flex; height: 26px; margin-top: 11px; margin-left: 20px; }
  .linerow.second { margin-top: 8px; }
  .select { display: flex; align-items: center; width: 157px; margin-right: 5px; border: 1px solid #999; border-radius: 3px; background: #fff; padding-left: 7px; }
  .select i { width: 105px; height: 1px; background: #555; margin-right: 8px; margin-top: 2px; }
  .select em { display: flex; align-items: center; padding-left: 11px; height: 24px; border-left: 1px solid #aaa; color: #999; }
  .per { width: 162px; padding: 0 0 0 4px; line-height: 26px; color: #777; }
  .num { width: 65px; height: 26px; padding-right: 3px; border: 1px solid #999; border-radius: 4px; background: #fff; color: #000; font: 15px/25px "Liberation Sans", sans-serif; text-align: right; }
  .spinner { width: 15px; height: 26px; border: 1px solid #b5b5b5; border-radius: 4px; background: #fff; }
  .spinner svg { margin: -1px; }
  .opacity { display: flex; height: 42px; padding: 8px 0 0 18px; border-bottom: 1px solid #dadce0; line-height: 25px; }
  .opacity b { width: 182px; }
  .checks { display: grid; grid-template: 30px 30px / 135px 135px; height: 70px; padding: 5px 0 0 20px; border-bottom: 1px solid #dadce0; }
  .checks span { display: flex; align-items: center; gap: 8px; }
  .buttons { display: grid; grid-template: repeat(3, 25px) / 130px 130px; gap: 2px; height: 107px; padding: 12px 0 0 18px; border-bottom: 1px solid #dadce0; }
  .buttons button { padding: 0; border: 1px solid #767676; border-radius: 3px; background: #efefef; color: #000; font: 15px "Liberation Sans", sans-serif; }
  .buttons button:last-child { grid-column: span 2; }
  .props { display: flex; gap: 2px; height: 28px; padding: 2px 2px; border-bottom: 1px solid #dadce0; color: #000; }
  .props b { display: flex; align-items: center; width: 147px; height: 23px; padding-left: 2px; background: #e5e5e5; }
  .props b:first-child { padding-left: 6px; gap: 6px; }

  footer { display: flex; height: 50px; background: #d4d4d4; color: #111; }
  .start { display: flex; align-items: center; width: 61px; padding-left: 19px; }
  .winsearch { display: flex; align-items: center; gap: 14px; width: 429px; padding-left: 12px; border: 1px solid #c8c8c8; background: #fff; font-size: 17px; color: #333; }
  .apps { display: flex; width: 370px; margin-left: -1px; flex: none; }
  .apps span { display: flex; align-items: center; justify-content: center; flex: none; width: 61.700px; }
  .apps .running { border-bottom: 3px solid #0078d7; padding-top: 3px; width: 50px; margin: 0 6px; }
  .apps .running.current { width: 60px; margin: 0 0 0 1px; background: #eef1f3; }
  .weather { display: flex; align-items: center; gap: 11px; width: 691px; padding-left: 513px; font-size: 17px; flex: none; }
  .tray { display: flex; align-items: center; gap: 10px; width: 184px; flex: none; }
  .lang { display: flex; align-items: center; width: 49px; font-size: 14.500px; }
  .clock { display: flex; flex-direction: column; align-items: flex-start; width: 84px; font-size: 14px; line-height: 24px; }
  .notice { padding-top: 13px; width: 47px; }
  .desk { width: 1px; background: #a5a5a5; }
</style>
